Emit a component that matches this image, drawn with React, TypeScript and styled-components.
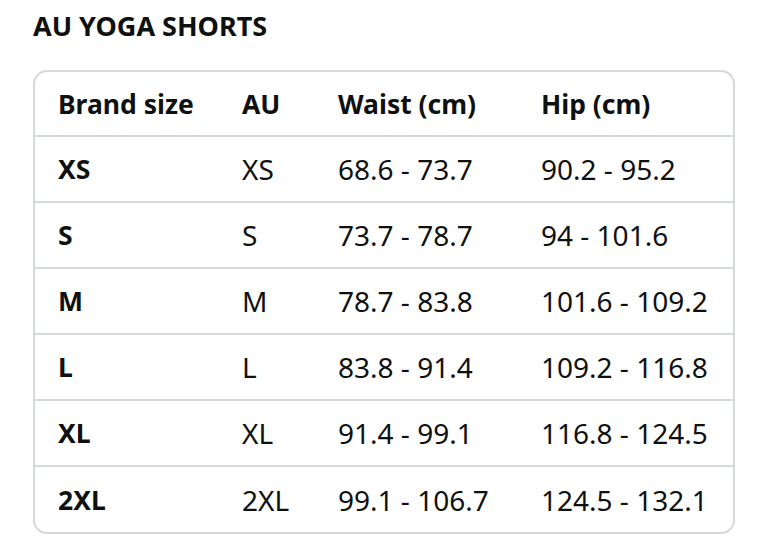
import styled, { createGlobalStyle } from "styled-components";

const GlobalStyle = createGlobalStyle`
  html, body {
    margin: 0;
    padding: 0;
    background: #ffffff;
  }
  body {
    font-family: "Noto Sans", "Liberation Sans", sans-serif;
    color: #0f1111;
  }
`;

const Page = styled.div`
  padding: 8px 43px 0 33px;
`;

const Title = styled.h2`
  margin: 0 0 26px;
  font-size: 27px;
  font-weight: 700;
  line-height: 36px;
  letter-spacing: 0;
`;

const TableBox = styled.div`
  border: 2px solid #d5d9d9;
  border-radius: 14px;
  overflow: hidden;
  width: 702px;
  box-sizing: border-box;
`;

const Table = styled.table`
  width: 100%;
  border-collapse: collapse;
  table-layout: fixed;
`;

const Col = styled.col<{ $w: number }>`
  width: ${(p) => p.$w}px;
`;

const Row = styled.tr<{ $last?: boolean; $h?: number }>`
  height: ${(p) => p.$h ?? 66}px;
  border-bottom: ${(p) => (p.$last ? "none" : "2px solid #d5d9d9")};
`;

const Head = styled.th`
  text-align: left;
  font-size: 26.5px;
  font-weight: 700;
  padding: 0 0 0 23px;
  white-space: nowrap;
`;

const Cell = styled.td<{ $bold?: boolean }>`
  font-size: ${(p) => (p.$bold ? "26.5px" : "28px")};
  font-weight: ${(p) => (p.$bold ? 700 : 400)};
  padding: 0 0 0 23px;
  white-space: nowrap;
`;

const rows = [
  ["XS", "XS", "68.6 - 73.7", "90.2 - 95.2"],
  ["S", "S", "73.7 - 78.7", "94 - 101.6"],
  ["M", "M", "78.7 - 83.8", "101.6 - 109.2"],
  ["L", "L", "83.8 - 91.4", "109.2 - 116.8"],
  ["XL", "XL", "91.4 - 99.1", "116.8 - 124.5"],
  ["2XL", "2XL", "99.1 - 106.7", "124.5 - 132.1"],
];

const App = () => {
  return (
    <Page>
      <GlobalStyle />
      <Title>AU YOGA SHORTS</Title>
      <TableBox>
        <Table>
          <colgroup>
            <Col $w={184} />
            <Col $w={96} />
            <Col $w={203} />
            <Col $w={215} />
          </colgroup>
          <thead>
            <Row $h={64}>
              <Head>Brand size</Head>
              <Head>AU</Head>
              <Head>Waist (cm)</Head>
              <Head>Hip (cm)</Head>
            </Row>
          </thead>
          <tbody>
            {rows.map((r, i) => (
              <Row key={r[0]} $last={i === rows.length - 1}>
                <Cell $bold>{r[0]}</Cell>
                <Cell>{r[1]}</Cell>
                <Cell>{r[2]}</Cell>
                <Cell>{r[3]}</Cell>
              </Row>
            ))}
          </tbody>
        </Table>
      </TableBox>
    </Page>
  );
};

export default App;
